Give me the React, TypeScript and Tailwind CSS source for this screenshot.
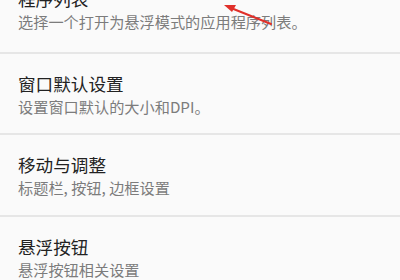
import React from "react";

const items = [
  { title: "程序列表", sub: "选择一个打开为悬浮模式的应用程序列表。" },
  { title: "窗口默认设置", sub: "设置窗口默认的大小和DPI。" },
  { title: "移动与调整", sub: "标题栏, 按钮, 边框设置" },
  { title: "悬浮按钮", sub: "悬浮按钮相关设置" },
];

export default function App() {
  return (
    <div
      className="relative w-[400px] h-[280px] overflow-hidden bg-[#fafafa]"
      style={{ fontFamily: '"Noto Sans CJK SC", "Noto Sans", sans-serif' }}
    >
      <div className="-mt-[28px] flex flex-col">
        {items.map((it, i) => (
          <div key={i} className="flex flex-col">
            <div
              className={
                i === 0
                  ? "h-[79.5px] pl-[18px] pt-[15px] flex flex-col"
                  : "h-[79.5px] pl-[18px] pt-[18px] flex flex-col"
              }
            >
              <div className="text-[17.6px] leading-[24px] text-[#222222]">{it.title}</div>
              <div className="text-[15.2px] leading-[20px] text-[#7c7c7c]">{it.sub}</div>
            </div>
            <div className="h-[2px] bg-[#e6e6e6]" />
          </div>
        ))}
      </div>
      <svg className="absolute left-0 top-0" width="400" height="280" viewBox="0 0 400 280">
        <line x1="231" y1="8" x2="271" y2="24" stroke="#e0302a" strokeWidth="2" strokeLinecap="round" />
        <polygon points="224,5 236,5 232,12" fill="#e0302a" />
      </svg>
    </div>
  );
}
